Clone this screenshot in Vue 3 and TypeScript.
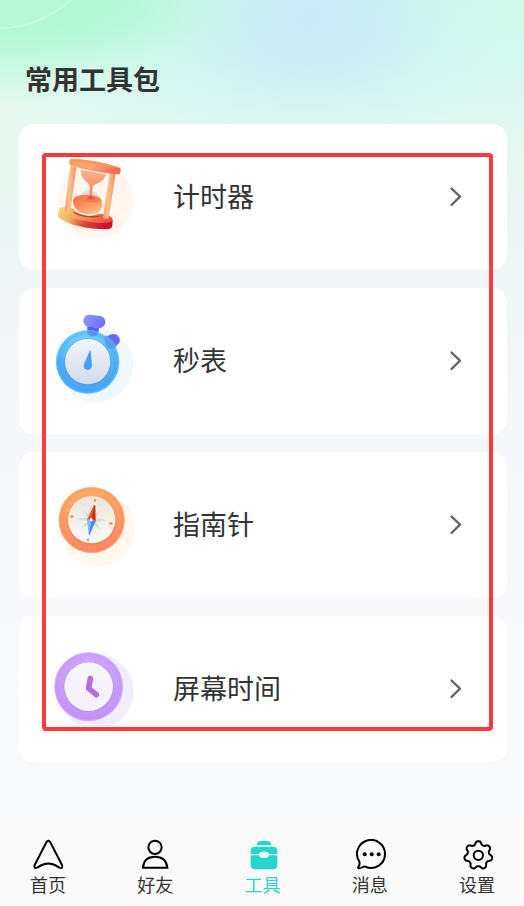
<script setup lang="ts">
import { ref } from 'vue'

type ToolId = 'timer' | 'stopwatch' | 'compass' | 'screen'
type TabId = 'home' | 'friends' | 'tools' | 'messages' | 'settings'

const tools: { id: ToolId; label: string }[] = [
  { id: 'timer', label: '计时器' },
  { id: 'stopwatch', label: '秒表' },
  { id: 'compass', label: '指南针' },
  { id: 'screen', label: '屏幕时间' },
]

const tabs: { id: TabId; label: string }[] = [
  { id: 'home', label: '首页' },
  { id: 'friends', label: '好友' },
  { id: 'tools', label: '工具' },
  { id: 'messages', label: '消息' },
  { id: 'settings', label: '设置' },
]

const active = ref<TabId>('tools')

// Seven-toothed gear outline around (52, 49)
function gearPath(): string {
  const points: string[] = []
  for (let i = 0; i < 140; i++) {
    const a = (i / 140) * Math.PI * 2
    const r = 37.5 + 5.5 * Math.tanh(1.4 * Math.cos(7 * a))
    points.push(`${(52 + r * Math.sin(a)).toFixed(1)} ${(49 - r * Math.cos(a)).toFixed(1)}`)
  }
  return `M${points.join('L')}Z`
}
const gear = gearPath()
</script>

<template>
  <div class="page">
    <main class="content">
      <h1 class="title">常用工具包</h1>
      <div class="board">
        <ul class="list">
          <li v-for="tool in tools" :key="tool.id">
            <button type="button" class="card">
              <svg v-if="tool.id === 'timer'" class="art" viewBox="0 0 90 96" aria-hidden="true">
                <defs>
                  <linearGradient id="tTop" x1="0" y1="0" x2="1" y2="0.2">
                    <stop offset="0" stop-color="#fd9a52" />
                    <stop offset="0.5" stop-color="#ffa77c" />
                    <stop offset="1" stop-color="#fb6a50" />
                  </linearGradient>
                  <linearGradient id="tPost" x1="0" y1="0" x2="1" y2="0.1">
                    <stop offset="0" stop-color="#f78758" />
                    <stop offset="0.45" stop-color="#fcc48c" />
                    <stop offset="1" stop-color="#f68a5c" />
                  </linearGradient>
                  <linearGradient id="tBase" x1="0" y1="0" x2="1" y2="0.2">
                    <stop offset="0" stop-color="#f8df7e" />
                    <stop offset="0.3" stop-color="#f3b060" />
                    <stop offset="0.6" stop-color="#df4639" />
                    <stop offset="1" stop-color="#cb132e" />
                  </linearGradient>
                  <linearGradient id="tDeck" x1="0" y1="0" x2="1" y2="0.2">
                    <stop offset="0" stop-color="#fade7c" />
                    <stop offset="0.4" stop-color="#f9a25e" />
                    <stop offset="1" stop-color="#ef5049" />
                  </linearGradient>
                  <linearGradient id="tSand" x1="0" y1="0" x2="0.6" y2="1">
                    <stop offset="0" stop-color="#f7602f" />
                    <stop offset="1" stop-color="#ffbc82" />
                  </linearGradient>
                  <linearGradient id="tBowl" x1="0" y1="0" x2="0" y2="1">
                    <stop offset="0" stop-color="#fbb48c" />
                    <stop offset="1" stop-color="#f97750" />
                  </linearGradient>
                </defs>
                <g transform="translate(-10 -4) scale(.33333)">
                  <circle cx="167" cy="167" r="113" fill="#fff6ef" />
                  <path d="M56 194Q60 186 78 187L200 211Q219 217 218 227L217 243Q214 253 198 253Q112 252 63 223Q52 216 54 207Z" fill="url(#tBase)" />
                  <path d="M56 194Q60 186 78 187L200 211Q219 217 217 226Q213 235 180 234Q108 228 62 204Q54 200 56 194Z" fill="url(#tDeck)" />
                  <path d="M97 197Q103 211 137 216Q170 220 183 213Q150 213 122 207Q104 203 97 197Z" fill="#a5321c" opacity=".75" />
                  <path d="M118 74L202 89Q198 116 164 124Q158 128 161 137Q188 151 190 184Q184 214 145 213Q98 206 97 177Q100 147 147 134Q151 126 146 118Q119 104 118 74Z" fill="#fff" opacity=".9" />
                  <path d="M150 132Q111 148 101 172Q143 151 187 174Q181 149 160 137Z" fill="#fbd8cb" />
                  <path d="M122 74L198 88Q195 109 168 117Q158 121 158 128L153 164H149L150 128Q150 119 141 112Q122 101 122 74Z" fill="url(#tBowl)" />
                  <path d="M99 172Q98 158 111 154Q147 144 180 160Q187 165 187 176Q188 206 145 208Q102 202 99 172Z" fill="url(#tSand)" />
                  <path d="M103 158Q120 148 151 151Q176 153 184 164Q168 179 139 168Q119 160 103 158Z" fill="#f47d59" />
                  <path d="M140 160L153 150L166 162Q152 166 140 160Z" fill="#dc5840" />
                  <path d="M91 63L109 67L91 199Q81 204 74 197Z" fill="url(#tPost)" />
                  <path d="M209 82L227 85L206 220Q196 224 189 218Z" fill="url(#tPost)" />
                  <path d="M92 42Q166 42 239 68Q244 71 242 78Q241 89 232 88Q157 81 94 62Q87 60 88 51Q88 43 92 42Z" fill="url(#tTop)" />
                  <path d="M92 43Q165 43 239 69Q166 61 92 46Z" fill="#fc9855" />
                </g>
              </svg>

              <svg v-else-if="tool.id === 'stopwatch'" class="art" viewBox="0 0 90 96" aria-hidden="true">
                <defs>
                  <linearGradient id="sRing" x1="0" y1="0" x2="0" y2="1">
                    <stop offset="0" stop-color="#75d2f9" />
                    <stop offset="0.5" stop-color="#4eb1f7" />
                    <stop offset="1" stop-color="#49a5f6" />
                  </linearGradient>
                  <linearGradient id="sFace" x1="0" y1="0" x2="0" y2="1">
                    <stop offset="0" stop-color="#f3f5fa" />
                    <stop offset="1" stop-color="#d3daeb" />
                  </linearGradient>
                  <linearGradient id="sKnob" x1="0" y1="0" x2="1" y2="0.4">
                    <stop offset="0" stop-color="#9297fb" />
                    <stop offset="1" stop-color="#6d72f4" />
                  </linearGradient>
                  <radialGradient id="sEdge">
                    <stop offset="0.82" stop-color="#2d94ff" stop-opacity="0" />
                    <stop offset="0.93" stop-color="#39a6ff" stop-opacity=".35" />
                    <stop offset="1" stop-color="#80d4ff" stop-opacity=".7" />
                  </radialGradient>
                </defs>
                <g transform="translate(-10 -8) scale(.33333)">
                  <circle cx="167" cy="179" r="113" fill="#f0f9ff" />
                  <path d="M142 64L177 68L174 94H141Z" fill="#5664ed" />
                  <rect x="130" y="31" width="66" height="36" rx="17" transform="rotate(7 163 49)" fill="url(#sKnob)" />
                  <path d="M202 94Q218 82 232 91Q243 101 238 113L226 125Z" fill="#646bf0" />
                  <circle cx="143" cy="171" r="95" fill="url(#sRing)" />
                  <circle cx="143" cy="171" r="95" fill="url(#sEdge)" />
                  <path d="M141 77Q158 74 174 81Q173 94 158 95Q143 94 141 77Z" fill="#498eee" opacity=".8" />
                  <path d="M194 96Q196 91 202 92Q226 107 229 124Q219 135 205 129Q191 116 194 96Z" fill="#5396ed" opacity=".75" />
                  <circle cx="143" cy="172" r="71" fill="#4298e9" opacity=".4" />
                  <circle cx="143" cy="170" r="68" fill="url(#sFace)" />
                  <path d="M149 137Q151 134 152 139L156 181Q155 195 143 195Q131 193 131 182Q132 176 137 166Z" fill="#459eff" />
                </g>
              </svg>

              <svg v-else-if="tool.id === 'compass'" class="art" viewBox="0 0 90 96" aria-hidden="true">
                <defs>
                  <linearGradient id="cRing" x1="0.4" y1="0" x2="0.6" y2="1">
                    <stop offset="0" stop-color="#fcad63" />
                    <stop offset="1" stop-color="#fd8467" />
                  </linearGradient>
                  <linearGradient id="cFace" x1="0" y1="0" x2="0" y2="1">
                    <stop offset="0" stop-color="#e8e5dd" />
                    <stop offset="1" stop-color="#fbfaf6" />
                  </linearGradient>
                  <radialGradient id="cEdge">
                    <stop offset="0.85" stop-color="#ff9858" stop-opacity="0" />
                    <stop offset="0.94" stop-color="#ff8550" stop-opacity=".3" />
                    <stop offset="1" stop-color="#ffc494" stop-opacity=".8" />
                  </radialGradient>
                </defs>
                <g transform="translate(-10 -2) scale(.33333)">
                  <circle cx="172" cy="161" r="113" fill="#fff8ee" />
                  <circle cx="155" cy="135" r="99" fill="url(#cRing)" />
                  <circle cx="155" cy="135" r="99" fill="url(#cEdge)" />
                  <circle cx="155" cy="136" r="73" fill="#d76b34" opacity=".35" />
                  <circle cx="155" cy="134" r="71" fill="url(#cFace)" />
                  <path d="M153 88L160 119L183 104L169 128L202 136L168 142L184 165L160 150L150 183L147 148L121 161L140 139L105 130L142 128L128 104L149 120Z" fill="#e0ddd3" />
                  <path d="M162 90L141 134L154 135Z" fill="#ed5732" />
                  <path d="M162 90L166 92L167 139L153 134Z" fill="#c92f0e" />
                  <path d="M141 134L154 135L146 180Z" fill="#85bcff" />
                  <path d="M154 135L167 138L149 179L146 181Z" fill="#428df5" />
                  <circle cx="154" cy="134" r="5" fill="#eeeae4" />
                  <g fill="#fa9650">
                    <rect x="162" y="71" width="6" height="10" rx="3" />
                    <rect x="141" y="189" width="6" height="10" rx="3" />
                    <rect x="90" y="121" width="11" height="7" rx="3" />
                    <rect x="207" y="142" width="11" height="7" rx="3" />
                  </g>
                </g>
              </svg>

              <svg v-else class="art" viewBox="0 0 90 96" aria-hidden="true">
                <defs>
                  <linearGradient id="kRing" x1="0" y1="0" x2="0" y2="1">
                    <stop offset="0" stop-color="#cda6f9" />
                    <stop offset="1" stop-color="#c094fb" />
                  </linearGradient>
                  <linearGradient id="kFace" x1="0" y1="0" x2="0" y2="1">
                    <stop offset="0" stop-color="#f7f6fc" />
                    <stop offset="1" stop-color="#f7f0ff" />
                  </linearGradient>
                  <radialGradient id="kEdge">
                    <stop offset="0.84" stop-color="#bd83f5" stop-opacity="0" />
                    <stop offset="0.94" stop-color="#c283fa" stop-opacity=".3" />
                    <stop offset="1" stop-color="#e6bfff" stop-opacity=".8" />
                  </radialGradient>
                </defs>
                <g transform="translate(-10 -1) scale(.33333)">
                  <circle cx="168" cy="155" r="113" fill="#f0edff" />
                  <circle cx="146" cy="140" r="103" fill="url(#kRing)" />
                  <circle cx="146" cy="140" r="103" fill="url(#kEdge)" />
                  <circle cx="146" cy="141" r="75" fill="#a16ee1" opacity=".45" />
                  <circle cx="146" cy="140" r="73" fill="url(#kFace)" />
                  <path d="M151 116L146 145L169 164" fill="none" stroke="#b46ce0" stroke-width="17" stroke-linecap="round" stroke-linejoin="round" />
                </g>
              </svg>

              <span class="name">{{ tool.label }}</span>
              <svg class="chevron" viewBox="0 0 14 22" aria-hidden="true">
                <path d="M2.5 2.5L11 10.7L2.5 19" />
              </svg>
            </button>
          </li>
        </ul>
        <div class="frame" aria-hidden="true"></div>
      </div>
    </main>

    <nav class="tabs">
      <a
        v-for="tab in tabs"
        :key="tab.id"
        :href="`#${tab.id}`"
        class="tab"
        :class="{ active: tab.id === active }"
        @click.prevent="active = tab.id"
      >
        <svg class="glyph" viewBox="0 0 96 96" aria-hidden="true">
          <path v-if="tab.id === 'home'" class="line" d="M43 10Q49 1 55 10L90 78Q94 91 81 85Q49 62 17 85Q4 91 8 78Z" />
          <g v-else-if="tab.id === 'friends'" class="line">
            <circle cx="48" cy="25" r="20" />
            <path d="M12 86Q14 53 48 53Q82 53 85 86Z" stroke-linejoin="miter" />
          </g>
          <g v-else-if="tab.id === 'tools'" fill="currentColor">
            <path d="M30 19V16Q32 6 42 6H60Q70 6 72 16V19Z" />
            <path d="M11 45V36Q11 23 24 23H78Q91 23 91 36V45H65V44Q65 38 59 38H43Q37 38 37 44V45Z" />
            <path d="M11 49H37Q37 56 43 56H59Q65 56 65 49H91V78Q91 91 78 91H24Q11 91 11 78Z" />
          </g>
          <g v-else-if="tab.id === 'messages'">
            <path class="line" d="M16 68A42 42 0 1 1 36 84Q31 81 27 84Q20 88 14 88Q10 86 14 82Q18 77 16 68Z" />
            <g fill="currentColor">
              <circle cx="32" cy="46" r="6" />
              <circle cx="53" cy="46" r="6" />
              <circle cx="74" cy="46" r="6" />
            </g>
          </g>
          <g v-else class="line">
            <path :d="gear" />
            <circle cx="52" cy="49" r="14" />
          </g>
        </svg>
        <span class="caption">{{ tab.label }}</span>
      </a>
    </nav>
  </div>
</template>

<style>
body {
  margin: 0;
}
</style>

<style scoped>
.page {
  box-sizing: border-box;
  display: flex;
  flex-direction: column;
  min-height: 100vh;
  font-family: 'Noto Sans CJK SC', sans-serif;
  color: #333;
  background:
    radial-gradient(circle at -3px -80px, rgba(255, 255, 255, 0.08) 107px, rgba(255, 255, 255, 0.3) 108px, rgba(255, 255, 255, 0.3) 109px, transparent 110px),
    radial-gradient(ellipse 240px 100px at 50px 0, rgba(174, 248, 211, 0.95) 0%, rgba(174, 248, 211, 0.75) 35%, rgba(190, 250, 222, 0.25) 70%, rgba(200, 250, 230, 0) 100%),
    radial-gradient(ellipse 110px 80px at 0 30px, rgba(178, 252, 205, 0.6), rgba(190, 250, 220, 0)),
    radial-gradient(ellipse 200px 130px at 310px 20px, rgba(200, 234, 248, 0.95) 0%, rgba(200, 234, 248, 0.7) 35%, rgba(203, 238, 247, 0.25) 70%, rgba(206, 240, 246, 0) 100%),
    radial-gradient(ellipse 140px 110px at 0 120px, rgba(236, 249, 240, 0.8), rgba(236, 249, 240, 0)),
    linear-gradient(#cef9ea 0, #d2f9ef 60px, #dcf6f1 105px, #e6f7f1 150px, #eff6f7 270px, #f5f7fb 400px, #f8f9fb 700px);
}

.content {
  padding: 59px 17px 40px 19px;
}

.title {
  margin: 0 0 25px;
  padding-left: 6px;
  font-size: 27px;
  line-height: 40px;
  font-weight: 700;
}

.board {
  position: relative;
}

.list {
  display: grid;
  gap: 18px;
  margin: 0;
  padding: 0;
  list-style: none;
}

.card {
  box-sizing: border-box;
  display: flex;
  align-items: center;
  width: 100%;
  padding: 25px 44px 25px 31px;
  border: 0;
  border-radius: 15px;
  background: #fff;
  font: inherit;
  color: inherit;
  text-align: left;
  cursor: pointer;
}

.art {
  flex: none;
  width: 90px;
  height: 96px;
}

.name {
  flex: 1;
  padding-bottom: 3px;
  margin-left: 33px;
  font-size: 27px;
  line-height: 40px;
}

.chevron {
  flex: none;
  width: 14px;
  height: 22px;
  fill: none;
  stroke: #666;
  stroke-width: 2.4;
  stroke-linecap: round;
  stroke-linejoin: round;
}

.frame {
  position: absolute;
  inset: 29px 14px 31px 23px;
  border: 4px solid #ff3838;
  border-radius: 4px;
  pointer-events: none;
}

.tabs {
  display: flex;
  justify-content: space-between;
  margin-top: auto;
  padding: 16px 13px 11px 14px;
  background: #fafafa;
}

.tab {
  display: flex;
  flex-direction: column;
  align-items: center;
  gap: 2px;
  width: 68px;
  color: #000;
  text-decoration: none;
}

.glyph {
  width: 32px;
  height: 32px;
}

.line {
  fill: none;
  stroke: currentColor;
  stroke-width: 6;
  stroke-linejoin: round;
}

.caption {
  font-size: 18px;
  line-height: 22px;
  color: #333;
}

.tab.active,
.tab.active .caption {
  color: #27d6cf;
}
</style>
